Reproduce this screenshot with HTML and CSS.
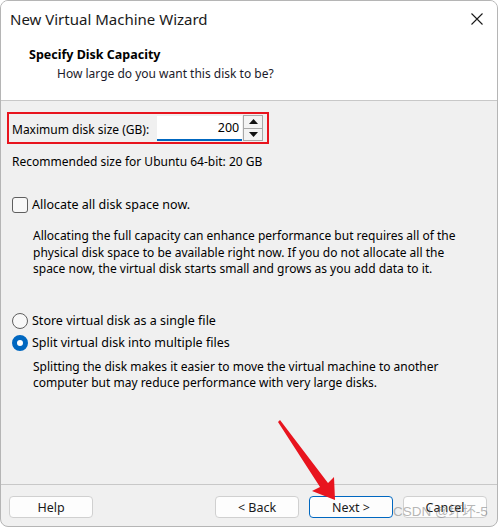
FILE: index.html
```html
<!DOCTYPE html>
<html>
<head>
<meta charset="utf-8">
<link rel="stylesheet" href="styles.css">
</head>
<body>
<div class="window">
  <div class="header">
    <div class="titlebar">
      <span class="title">New Virtual Machine Wizard</span>
      <svg class="close" width="12" height="12" viewBox="0 0 12 12"><path d="M0.5 0.5 L11.5 11.5 M11.5 0.5 L0.5 11.5" stroke="#1a1a1a" stroke-width="1.1" fill="none"/></svg>
    </div>
    <div class="heading">Specify Disk Capacity</div>
    <div class="subheading">How large do you want this disk to be?</div>
  </div>
  <div class="body">
    <div class="sizebox">
      <span class="label">Maximum disk size (GB):</span>
      <div class="input">200</div>
      <div class="spinner">
        <div class="spin"><svg width="9" height="5" viewBox="0 0 9 5"><path d="M4.5 0 L9 5 L0 5Z" fill="#111"/></svg></div>
        <div class="spin"><svg width="9" height="5" viewBox="0 0 9 5"><path d="M0 0 L9 0 L4.5 5Z" fill="#111"/></svg></div>
      </div>
    </div>
    <div class="recommend">Recommended size for Ubuntu 64-bit: 20 GB</div>
    <div class="option check-row">
      <span class="checkbox"></span>
      <span>Allocate all disk space now.</span>
    </div>
    <p class="desc desc1">Allocating the full capacity can enhance performance but requires all of the physical disk space to be available right now. If you do not allocate all the space now, the virtual disk starts small and grows as you add data to it.</p>
    <div class="option radio-row first">
      <span class="radio"></span>
      <span>Store virtual disk as a single file</span>
    </div>
    <div class="option radio-row">
      <span class="radio on"></span>
      <span>Split virtual disk into multiple files</span>
    </div>
    <p class="desc desc2">Splitting the disk makes it easier to move the virtual machine to another computer but may reduce performance with very large disks.</p>
  </div>
  <div class="footer">
    <button class="btn">Help</button>
    <div class="spacer"></div>
    <button class="btn">&lt; Back</button>
    <button class="btn primary">Next &gt;</button>
    <button class="btn">Cancel</button>
  </div>
  <div class="watermark">CSDN @坏坏-5</div>
  <svg class="arrow" width="80" height="100" viewBox="0 0 80 100">
    <path d="M1 2 L3 0 L51 63 L57 57 L58 80 L35 71 L43 67 Z" fill="#e8141e"/>
  </svg>
</div>
</body>
</html>
```

FILE: styles.css
```css
* { box-sizing: border-box; }
html, body { margin: 0; padding: 0; background: #ffffff; }
body {
  font-family: "Segoe UI", "Noto Sans", "Liberation Sans", sans-serif;
  font-size: 12px;
  color: #000;
}
.window {
  position: relative;
  width: 498px;
  height: 527px;
  border: 1px solid #b5b5b5;
  border-radius: 8px;
  overflow: hidden;
  display: flex;
  flex-direction: column;
  background: #f0f0f0;
}
.header {
  background: #ffffff;
  height: 100px;
  border-bottom: 1px solid #c8c8c8;
  flex: none;
}
.titlebar {
  display: flex;
  justify-content: space-between;
  align-items: center;
  height: 35px;
  padding: 0 14px 0 9px;
}
.title { font-size: 15px; color: #1a1a1a; }
.heading {
  font-weight: bold;
  font-size: 12.5px;
  margin: 10px 0 0 28px;
  line-height: 17px;
}
.subheading {
  margin: 3px 0 0 56px;
  line-height: 16px;
  color: #1a1a2a;
}
.body {
  flex: 1;
  padding: 11px 0 0 6px;
  border-bottom: 1px solid #c8c8c8;
}
.sizebox {
  display: flex;
  align-items: center;
  width: 262px;
  height: 32px;
  border: 2px solid #e8141e;
  padding: 2px 4px 2px 3px;
}
.label { width: 147px; padding-top: 2px; }
.input {
  width: 86px;
  height: 25px;
  background: #fff;
  border-bottom: 2px solid #0067c0;
  text-align: right;
  padding-right: 3px;
  line-height: 23px;
  font-size: 12.5px;
}
.spinner {
  width: 20px;
  height: 26px;
  display: flex;
  flex-direction: column;
  gap: 1px;
  border: 1px solid #a8a8a8;
  background: #a8a8a8;
  margin-left: 1px;
}
.spin {
  flex: 1;
  background: #f3f3f3;
  display: flex;
  align-items: center;
  justify-content: center;
}
.recommend { margin: 10px 0 0 5px; line-height: 16px; }
.option {
  display: flex;
  align-items: center;
  gap: 4px;
  line-height: 16px;
  margin-left: 5px;
  font-size: 12.5px;
}
.check-row { margin-top: 27px; }
.checkbox {
  width: 16px;
  height: 16px;
  border: 1px solid #5f5f5f;
  border-radius: 3px;
  background: #f8f8f8;
}
.radio {
  width: 16px;
  height: 16px;
  border: 1px solid #5f5f5f;
  border-radius: 50%;
  background: #f8f8f8;
}
.radio.on {
  border: 5px solid #0067c0;
  background: #fff;
}
.desc {
  margin: 0 0 0 26px;
  line-height: 16.5px;
  width: 440px;
}
.desc1 { margin-top: 15px; }
.radio-row.first { margin-top: 35px; }
.radio-row { margin-top: 6px; }
.desc2 { margin-top: 8px; }
.footer {
  flex: none;
  height: 41px;
  display: flex;
  align-items: flex-start;
  padding: 11px 10px 0 8px;
  gap: 10px;
}
.spacer { flex: 1; }
.btn {
  width: 84px;
  height: 22px;
  border: 1px solid #d0d0d0;
  border-radius: 4px;
  background: #fdfdfd;
  font-family: inherit;
  font-size: 12.5px;
  color: #1a1a1a;
  padding: 0;
}
.btn.primary { border-color: #0067c0; }
.watermark {
  position: absolute;
  left: 392px;
  top: 499px;
  font-family: "Liberation Sans", "Noto Sans CJK SC", sans-serif;
  font-size: 13.5px;
  color: rgba(120, 120, 120, 0.55);
  white-space: nowrap;
}
.arrow {
  position: absolute;
  left: 276px;
  top: 419px;
}
```
